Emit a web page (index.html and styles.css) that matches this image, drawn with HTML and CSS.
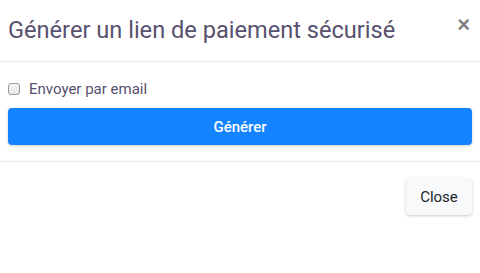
FILE: index.html
```html
<!DOCTYPE html>
<html lang="fr">
<head>
<meta charset="utf-8">
<link rel="stylesheet" href="styles.css">
</head>
<body>
<div class="modal">
  <div class="modal-header">
    <h5 class="modal-title">Générer un lien de paiement sécurisé</h5>
    <button class="close" type="button">×</button>
  </div>
  <div class="modal-body">
    <label class="check-row">
      <span class="checkbox"></span>
      <span class="check-label">Envoyer par email</span>
    </label>
    <button class="btn btn-primary" type="button">Générer</button>
  </div>
  <div class="modal-footer">
    <button class="btn btn-light" type="button">Close</button>
  </div>
</div>
</body>
</html>
```
FILE: styles.css
```css
* { box-sizing: border-box; }
html, body { margin: 0; padding: 0; background: #fff; }
body {
  width: 480px;
  height: 273px;
  font-family: Roboto, "Liberation Sans", sans-serif;
  color: #212529;
}
.modal { display: flex; flex-direction: column; }
.modal-header {
  display: flex;
  justify-content: space-between;
  align-items: flex-start;
  padding: 14px 8px 15px 8px;
  border-bottom: 1px solid #e9ecef;
}
.modal-title {
  margin: 0;
  font-size: 23.6px;
  line-height: 32px;
  font-weight: 400;
  color: #57516f;
}
.close {
  border: 0;
  background: transparent;
  padding: 0;
  margin: 2px 2px 0 0;
  font-family: "Liberation Sans", sans-serif;
  font-size: 22px;
  font-weight: 700;
  line-height: 18px;
  color: #808080;
}
.modal-body {
  display: flex;
  flex-direction: column;
  padding: 16px 8px 16px 8px;
}
.check-row {
  display: flex;
  align-items: center;
  gap: 9px;
  height: 21px;
  margin-bottom: 9px;
}
.checkbox {
  width: 12px;
  height: 12px;
  border: 1px solid #9a9a9a;
  border-radius: 3px;
  background: linear-gradient(#f4f4f4, #e6e6e6);
}
.check-label {
  font-size: 15px;
  color: #57516f;
}
.btn {
  border: 0;
  border-radius: 4px;
  font-family: Roboto, "Liberation Sans", sans-serif;
  font-size: 15px;
  height: 37px;
  padding: 0 12px;
  box-shadow: 0 1px 3px rgba(0,0,0,0.2);
}
.btn-primary {
  width: 100%;
  background: #1383ff;
  color: #fff;
  font-weight: 500;
}
.modal-footer {
  display: flex;
  justify-content: flex-end;
  padding: 16px 8px;
  border-top: 1px solid #e9ecef;
}
.btn-light {
  width: 66px;
  background: #f8f9fa;
  color: #212529;
}
```
